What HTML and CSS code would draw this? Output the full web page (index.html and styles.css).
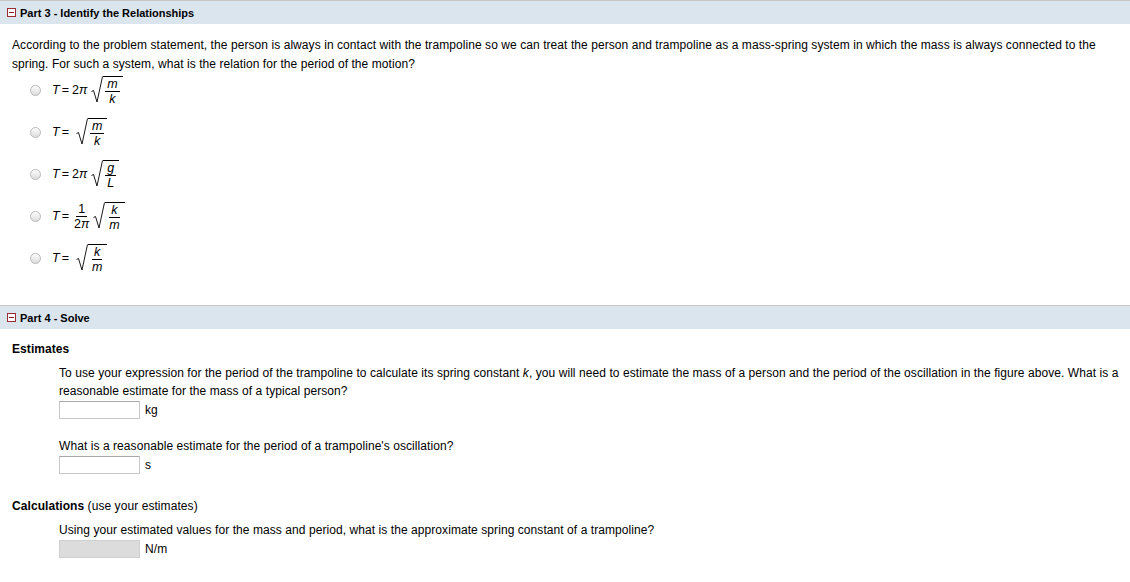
FILE: index.html
```html
<!DOCTYPE html>
<html lang="en">
<head>
    <meta charset="UTF-8">
    <title>Trampoline - Parts 3 and 4</title>
    <link rel="stylesheet" href="styles.css">
</head>
<body>

<div class="part">
    <div class="part-head first">
        <span class="toggle"></span>
        <span>Part 3 - Identify the Relationships</span>
    </div>
    <div class="part-body part3">
        <p class="question">According to the problem statement, the person is always in contact with the trampoline so we can treat the person and trampoline as a mass-spring system in which the mass is always connected to the spring. For such a system, what is the relation for the period of the motion?</p>

        <div class="options">
            <label class="option">
                <input type="radio" name="period" class="radio">
                <span class="formula"><i>T</i><span class="eq">=</span>2<i>π</i>
                    <span class="sqrt">
                        <svg class="radical" width="12" height="27" viewBox="0 0 12 27"><path d="M0.5 15.5 L2.5 14.5 L6 26 L11.5 0.5" fill="none" stroke="#000" stroke-width="0.9"/></svg>
                        <span class="radicand"><span class="frac"><span class="num"><i>m</i></span><span class="den"><i>k</i></span></span></span>
                    </span>
                </span>
            </label>
            <label class="option">
                <input type="radio" name="period" class="radio">
                <span class="formula"><i>T</i><span class="eq">=</span>
                    <span class="sqrt">
                        <svg class="radical" width="12" height="27" viewBox="0 0 12 27"><path d="M0.5 15.5 L2.5 14.5 L6 26 L11.5 0.5" fill="none" stroke="#000" stroke-width="0.9"/></svg>
                        <span class="radicand"><span class="frac"><span class="num"><i>m</i></span><span class="den"><i>k</i></span></span></span>
                    </span>
                </span>
            </label>
            <label class="option">
                <input type="radio" name="period" class="radio">
                <span class="formula"><i>T</i><span class="eq">=</span>2<i>π</i>
                    <span class="sqrt">
                        <svg class="radical" width="12" height="27" viewBox="0 0 12 27"><path d="M0.5 15.5 L2.5 14.5 L6 26 L11.5 0.5" fill="none" stroke="#000" stroke-width="0.9"/></svg>
                        <span class="radicand"><span class="frac"><span class="num"><i>g</i></span><span class="den"><i>L</i></span></span></span>
                    </span>
                </span>
            </label>
            <label class="option">
                <input type="radio" name="period" class="radio">
                <span class="formula"><i>T</i><span class="eq">=</span>
                    <span class="frac plain"><span class="num">1</span><span class="den">2<i>π</i></span></span>
                    <span class="sqrt">
                        <svg class="radical" width="12" height="27" viewBox="0 0 12 27"><path d="M0.5 15.5 L2.5 14.5 L6 26 L11.5 0.5" fill="none" stroke="#000" stroke-width="0.9"/></svg>
                        <span class="radicand"><span class="frac"><span class="num"><i>k</i></span><span class="den"><i>m</i></span></span></span>
                    </span>
                </span>
            </label>
            <label class="option">
                <input type="radio" name="period" class="radio">
                <span class="formula"><i>T</i><span class="eq">=</span>
                    <span class="sqrt">
                        <svg class="radical" width="12" height="27" viewBox="0 0 12 27"><path d="M0.5 15.5 L2.5 14.5 L6 26 L11.5 0.5" fill="none" stroke="#000" stroke-width="0.9"/></svg>
                        <span class="radicand"><span class="frac"><span class="num"><i>k</i></span><span class="den"><i>m</i></span></span></span>
                    </span>
                </span>
            </label>
        </div>
    </div>
</div>

<div class="part">
    <div class="part-head">
        <span class="toggle"></span>
        <span>Part 4 - Solve</span>
    </div>
    <div class="part-body part4">
        <h4 class="sub-head">Estimates</h4>
        <div class="indent">
            <p class="prompt">To use your expression for the period of the trampoline to calculate its spring constant <span class="var">k</span>, you will need to estimate the mass of a person and the period of the oscillation in the figure above. What is a reasonable estimate for the mass of a typical person?</p>
            <div class="answer">
                <input type="text" class="answer-box">
                <span class="unit">kg</span>
            </div>

            <p class="prompt second">What is a reasonable estimate for the period of a trampoline's oscillation?</p>
            <div class="answer">
                <input type="text" class="answer-box">
                <span class="unit">s</span>
            </div>
        </div>

        <h4 class="sub-head calc">Calculations <span class="note">(use your estimates)</span></h4>
        <div class="indent">
            <p class="prompt">Using your estimated values for the mass and period, what is the approximate spring constant of a trampoline?</p>
            <div class="answer">
                <input type="text" class="answer-box locked" disabled>
                <span class="unit">N/m</span>
            </div>
        </div>
    </div>
</div>

</body>
</html>
```

FILE: styles.css
```css
/* page */
body {
    margin: 0;
    font-family: "Liberation Sans", Arial, sans-serif;
    font-size: 12px;
    letter-spacing: 0.07px;
    color: #000;
    background-color: #fff;
}

p {
    margin: 0;
}

/* part header bars */
.part-head {
    display: flex;
    align-items: center;
    gap: 4px;
    height: 23px;
    padding-left: 7px;
    background-color: #dbe5ee;
    border-top: 1px solid #c6c6c6;
    font-size: 11px;
    font-weight: bold;
    letter-spacing: 0;
}

.toggle {
    position: relative;
    width: 7px;
    height: 7px;
    border: 1px solid #9e2b34;
    background-color: #fff;
}

.toggle::after {
    content: "";
    position: absolute;
    left: 1px;
    right: 1px;
    top: 3px;
    height: 1px;
    background-color: #8c1c26;
}

/* part 3 */
.part3 {
    padding: 12px 12px 26px;
}

.question {
    line-height: 19px;
}

.options {
    margin: -5px 0 0 18px;
}

.option {
    display: flex;
    align-items: center;
    height: 42px;
}

.radio {
    appearance: none;
    -webkit-appearance: none;
    width: 11px;
    height: 11px;
    margin: 0 11px 0 0;
    border: 1px solid #b9b9b9;
    border-radius: 50%;
    background: linear-gradient(#fdfdfd, #dcdcdc);
    box-sizing: border-box;
}

.formula {
    display: flex;
    align-items: center;
    font-size: 12.5px;
    letter-spacing: 0;
}

.formula i {
    font-style: italic;
}

.eq {
    margin: 0 3px 0 2px;
}

.sqrt {
    display: flex;
    align-items: flex-start;
    margin-left: 4px;
}

.radical {
    display: block;
}

.radicand {
    border-top: 1px solid #000;
    padding: 1px 3px 0 2px;
}

.frac {
    display: flex;
    flex-direction: column;
    align-items: center;
    line-height: 12px;
}

.frac .num {
    padding: 0 2px 1px;
    border-bottom: 1px solid #000;
}

.frac .den {
    padding: 1px 2px 0;
}

.frac.plain {
    margin: 0 -2px 0 0;
}

/* part 4 */
.part4 {
    padding: 12px 4px 20px 12px;
}

.sub-head {
    margin: 0 0 7px;
    font-size: 12px;
    line-height: 16px;
}

.note {
    font-weight: normal;
}

.calc {
    margin-top: 24px;
}

.indent {
    margin-left: 47px;
}

.prompt {
    line-height: 18px;
}

.var {
    font-style: italic;
}

.prompt.second {
    margin-top: 18px;
}

.answer {
    display: flex;
    align-items: center;
    gap: 5px;
    margin-top: 1px;
}

.answer-box {
    width: 81px;
    height: 18px;
    margin: 0;
    padding: 0 3px;
    border: 1px solid #c8c8c8;
    border-top-color: #a9a9a9;
    box-sizing: border-box;
    font-size: 12px;
}

.answer-box.locked {
    background-color: #dcdcdc;
    border-color: #d0d0d0;
}
```
